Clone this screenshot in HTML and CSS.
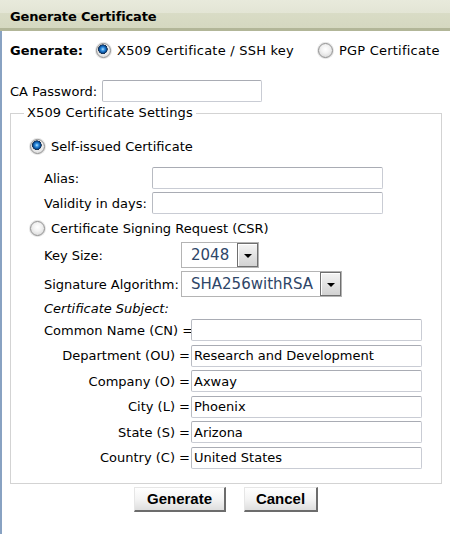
FILE: index.html
```html
<!DOCTYPE html>
<html>
<head>
<meta charset="utf-8">
<link rel="stylesheet" href="styles.css">
</head>
<body>
<div class="header">Generate Certificate</div>
<div class="main">
  <div class="gen-row">
    <span class="gen-label">Generate:</span>
    <label class="opt wide-text"><input type="radio" name="kind" class="radio" checked><span>X509 Certificate / SSH key</span></label>
    <label class="opt pgp wide-text"><input type="radio" name="kind" class="radio"><span>PGP Certificate</span></label>
  </div>
  <div class="ca-row">
    <span class="ca-label">CA Password:</span>
    <input class="text ca-input" type="password">
  </div>
  <fieldset class="settings">
    <legend>X509 Certificate Settings</legend>
    <label class="opt self"><input type="radio" name="mode" class="radio" checked><span>Self-issued Certificate</span></label>
    <div class="pair first"><span class="pair-label">Alias:</span><input class="text pair-input"></div>
    <div class="pair"><span class="pair-label">Validity in days:</span><input class="text pair-input"></div>
    <label class="opt csr"><input type="radio" name="mode" class="radio"><span>Certificate Signing Request (CSR)</span></label>
    <div class="sel-row key"><span class="sel-label">Key Size:</span><div class="select small"><span class="sel-val">2048</span><span class="sel-btn"></span></div></div>
    <div class="sel-row sig"><span class="sel-label">Signature Algorithm:</span><div class="select wide"><span class="sel-val">SHA256withRSA</span><span class="sel-btn"></span></div></div>
    <div class="subject-title">Certificate Subject:</div>
    <div class="subject">
      <span class="sub-label">Common Name (CN) =</span><input class="text sub-input" value="">
      <span class="sub-label">Department (OU) =</span><input class="text sub-input" value="Research and Development">
      <span class="sub-label">Company (O) =</span><input class="text sub-input" value="Axway">
      <span class="sub-label">City (L) =</span><input class="text sub-input" value="Phoenix">
      <span class="sub-label">State (S) =</span><input class="text sub-input" value="Arizona">
      <span class="sub-label">Country (C) =</span><input class="text sub-input" value="United States">
    </div>
  </fieldset>
  <div class="buttons">
    <button class="btn gen">Generate</button>
    <button class="btn cancel">Cancel</button>
  </div>
</div>
</body>
</html>
```
FILE: styles.css
```css
html, body {
  margin: 0;
  padding: 0;
  background: #fff;
}
body {
  font-family: "DejaVu Sans", Verdana, sans-serif;
  font-size: 13px;
  color: #000;
  height: 534px;
  overflow: hidden;
}
.header {
  height: 28px;
  border-bottom: 3px solid #b2b698;
  background: linear-gradient(#e8eadc 0%, #e3e5d5 45%, #d9dcc6 46%, #d5d8c0 100%);
  padding-left: 10px;
  font-weight: bold;
  line-height: 33px;
  letter-spacing: -0.15px;
}
.main {
  border-left: 2px solid #88a2c2;
  padding: 0 8px;
  height: 503px;
}
.gen-row {
  display: flex;
  align-items: center;
  height: 20px;
  padding-top: 9px;
  white-space: nowrap;
}
.gen-label {
  width: 86px;
  flex: none;
  font-weight: bold;
}
.opt {
  display: flex;
  align-items: center;
  flex: none;
  white-space: nowrap;
}
.wide-text span {
  letter-spacing: 0.22px;
}
.radio {
  appearance: none;
  -webkit-appearance: none;
  margin: 0 6px 0 0;
  width: 15px;
  height: 15px;
  box-sizing: border-box;
  border-radius: 50%;
  border: 1px solid #8e8e8e;
  background: radial-gradient(circle at 50% 40%, #ffffff 0, #f2f2f2 40%, #cfcfcf 100%);
  box-shadow: 0 0 0 1px #e4e4e4;
  flex: none;
}
.radio:checked {
  background:
    radial-gradient(circle at 45% 40%, #bfe6ff 0, #3f9be6 1.5px, #1265b8 3px, #0b3f7a 4px, #1a2f4a 4.6px, transparent 5px),
    radial-gradient(circle at 50% 40%, #ffffff 0, #f2f2f2 40%, #cfcfcf 100%);
}
.pgp {
  margin-left: 24px;
}
.ca-row {
  display: flex;
  align-items: center;
  margin-top: 20px;
}
.ca-label {
  width: 92px;
}
.text {
  box-sizing: border-box;
  height: 22px;
  margin: 0;
  border: 1px solid #c9ccd4;
  border-top-color: #a9acb4;
  border-left-color: #b8bbc2;
  border-radius: 2px;
  padding: 0 2px;
  font-family: "DejaVu Sans", Verdana, sans-serif;
  font-size: 13px;
  color: #000;
  background: #fff;
  outline: none;
}
.ca-input {
  width: 160px;
}
.settings {
  margin: 3px 0 0 0;
  padding: 0 0 14px 0;
  border: 1px solid #d3d3d3;
  min-width: 0;
}
.settings legend {
  margin-left: 13px;
  padding: 0 3px;
  line-height: 16px;
  letter-spacing: 0.12px;
}
.self {
  margin: 18px 0 0 19px;
}
.csr {
  margin: 7px 0 0 19px;
}
.pair {
  display: flex;
  align-items: center;
  margin: 3px 0 0 33px;
}
.pair.first {
  margin-top: 13px;
}
.pair-label {
  width: 108px;
}
.pair-input {
  width: 231px;
}
.sel-row {
  display: flex;
  align-items: center;
  margin-left: 33px;
}
.sel-row.key {
  margin-top: 6px;
}
.sel-row.sig {
  margin-top: 3px;
}
.sel-label {
  width: 137px;
}
.select {
  box-sizing: border-box;
  height: 26px;
  border: 1px solid #b4b4b4;
  display: flex;
  align-items: center;
  justify-content: space-between;
  background: #fff;
}
.select.small {
  width: 78px;
}
.select.wide {
  width: 161px;
}
.sel-val {
  padding-left: 9px;
  font-size: 15px;
  color: #2e4668;
}
.sel-btn {
  box-sizing: border-box;
  width: 21px;
  height: 24px;
  border: 1px solid #6f6f6f;
  background: linear-gradient(#f4f4f4, #d2d2d2);
  box-shadow: inset 1px 1px 0 #fff;
  display: flex;
  align-items: center;
  justify-content: center;
}
.sel-btn::after {
  content: "";
  width: 0;
  height: 0;
  border-left: 4px solid transparent;
  border-right: 4px solid transparent;
  border-top: 4px solid #000;
  margin-top: 1px;
}
.subject-title {
  margin: 4px 0 0 33px;
  font-style: italic;
  line-height: 16px;
}
.subject {
  display: grid;
  grid-template-columns: 146px 231px;
  column-gap: 1px;
  row-gap: 3.6px;
  align-items: center;
  margin: 2px 0 0 33px;
}
.sub-label {
  text-align: right;
  white-space: nowrap;
}
.sub-input {
  width: 231px;
}
.buttons {
  display: flex;
  justify-content: center;
  gap: 18px;
  margin-top: 3px;
}
.btn {
  box-sizing: border-box;
  height: 25px;
  margin: 0;
  padding: 0;
  font-family: "Liberation Sans", Arial, sans-serif;
  font-weight: bold;
  font-size: 15px;
  color: #000;
  background: linear-gradient(#ffffff 0%, #f4f4f4 50%, #dedede 100%);
  border: 1px solid #e6e6e6;
  border-right: 2px solid #6c6c6c;
  border-bottom: 2px solid #6c6c6c;
}
.btn.gen {
  width: 92px;
}
.btn.cancel {
  width: 74px;
}
```
